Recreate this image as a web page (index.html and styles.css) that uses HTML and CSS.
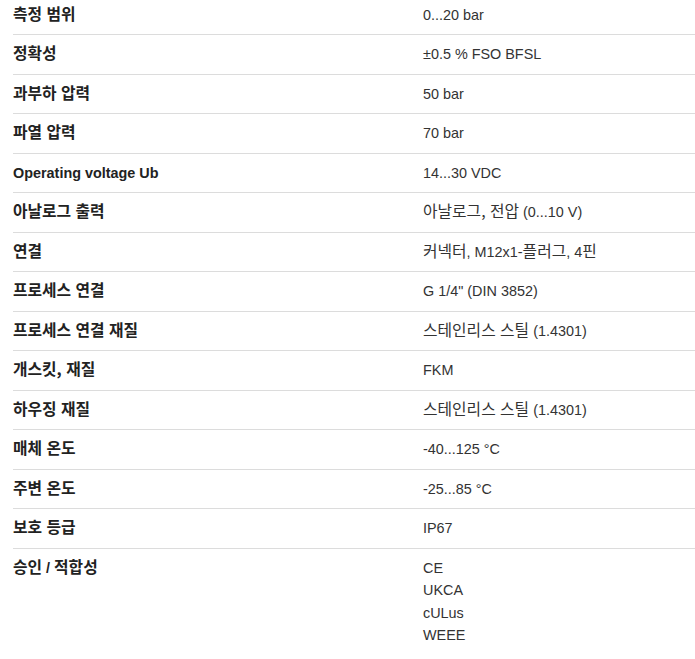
FILE: index.html
```html
<!DOCTYPE html>
<html lang="ko">
<head>
<meta charset="utf-8">
<title>사양</title>
<link rel="stylesheet" href="styles.css">
</head>
<body>
<div class="specs">
  <div class="row"><div class="label"><span class="ko">측정 범위</span></div><div class="value">0...20 bar</div></div>
  <div class="row"><div class="label"><span class="ko">정확성</span></div><div class="value">±0.5 % FSO BFSL</div></div>
  <div class="row"><div class="label"><span class="ko">과부하 압력</span></div><div class="value">50 bar</div></div>
  <div class="row"><div class="label"><span class="ko">파열 압력</span></div><div class="value">70 bar</div></div>
  <div class="row"><div class="label">Operating voltage Ub</div><div class="value">14...30 VDC</div></div>
  <div class="row"><div class="label"><span class="ko">아날로그 출력</span></div><div class="value"><span class="ko">아날로그, 전압</span> (0...10 V)</div></div>
  <div class="row"><div class="label"><span class="ko">연결</span></div><div class="value"><span class="ko">커넥터</span>, M12x1-<span class="ko">플러그</span>, 4<span class="ko">핀</span></div></div>
  <div class="row"><div class="label"><span class="ko">프로세스 연결</span></div><div class="value">G 1/4" (DIN 3852)</div></div>
  <div class="row"><div class="label"><span class="ko">프로세스 연결 재질</span></div><div class="value"><span class="ko">스테인리스 스틸</span> (1.4301)</div></div>
  <div class="row"><div class="label"><span class="ko">개스킷, 재질</span></div><div class="value">FKM</div></div>
  <div class="row"><div class="label"><span class="ko">하우징 재질</span></div><div class="value"><span class="ko">스테인리스 스틸</span> (1.4301)</div></div>
  <div class="row"><div class="label"><span class="ko">매체 온도</span></div><div class="value">-40...125 °C</div></div>
  <div class="row"><div class="label"><span class="ko">주변 온도</span></div><div class="value">-25...85 °C</div></div>
  <div class="row"><div class="label"><span class="ko">보호 등급</span></div><div class="value">IP67</div></div>
  <div class="row last"><div class="label"><span class="ko">승인</span> / <span class="ko">적합성</span></div><div class="value">CE<br>UKCA<br>cULus<br>WEEE</div></div>
</div>
</body>
</html>
```
FILE: styles.css
```css
html, body {
  margin: 0;
  padding: 0;
  background: #fff;
}
body {
  font-family: "Liberation Sans", Arial, "Noto Sans CJK KR", sans-serif;
  font-size: 14.4px;
  line-height: 22.5px;
  color: #333;
}
.specs {
  margin-top: -4.2px;
  padding-left: 13px;
}
.row {
  display: grid;
  grid-template-columns: 410px 1fr;
  padding: 8px 0;
  border-bottom: 1px solid #dcdcdc;
}
.row.last {
  border-bottom: none;
}
.label {
  font-weight: bold;
  color: #222;
}
.value {
  color: #333;
}
.ko {
  font-family: "Noto Sans CJK KR", "Liberation Sans", sans-serif;
  font-size: 15.8px;
  line-height: 14px;
}
.label .ko {
  font-weight: 600;
}
```
